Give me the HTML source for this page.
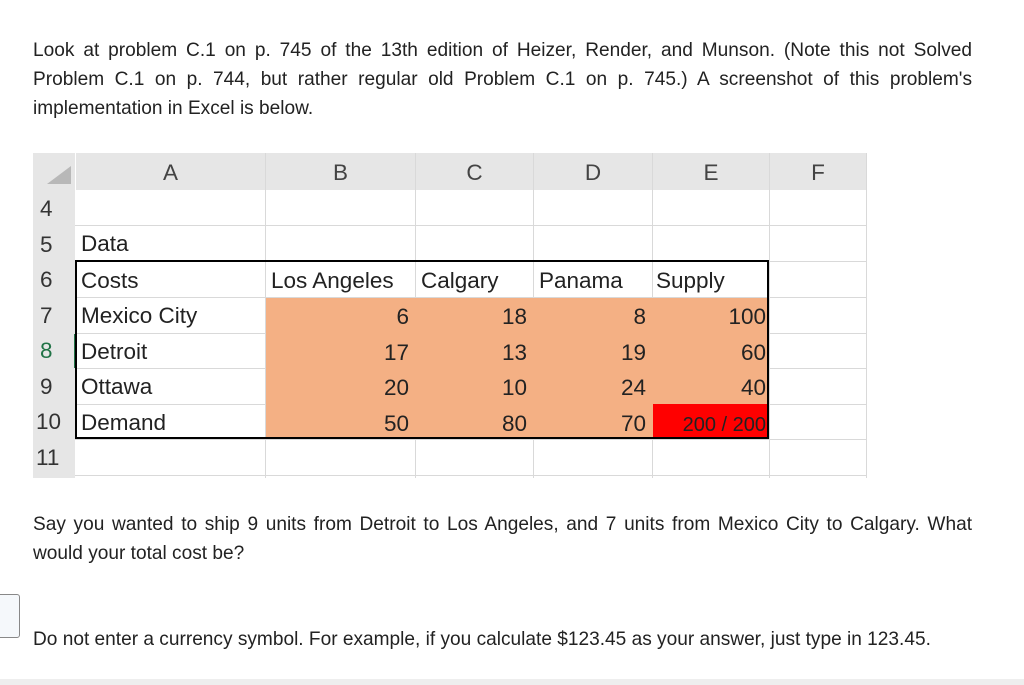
<!DOCTYPE html><html><head><style>
body{margin:0;width:1024px;height:685px;background:#fff;position:relative;overflow:hidden;font-family:"Liberation Sans",Arial,sans-serif;color:#222}
p{position:absolute;left:33px;width:939px;margin:0;font-size:19.1px;line-height:29px}
p span{display:block;text-align:justify;text-align-last:justify}
p span.e{text-align-last:left}
.g{position:absolute;font-family:"Liberation Sans",sans-serif;font-size:22.5px;color:#222}
.c{position:absolute;box-sizing:border-box;line-height:36px;white-space:nowrap}
.h{background:#e6e6e6;color:#444;text-align:center}
.o{background:#f4b084}
.r{text-align:right;padding-right:6px}
.l{padding-left:5px}
.vl{position:absolute;width:1px;background:#d9d9d9}
.hl{position:absolute;height:1px;background:#d9d9d9}
</style></head><body>
<p style="top:36px"><span>Look at problem C.1 on p. 745 of the 13th edition of Heizer, Render, and Munson. (Note this not Solved</span><span>Problem C.1 on p. 744, but rather regular old Problem C.1 on p. 745.) A screenshot of this problem's</span><span class="e">implementation in Excel is below.</span></p>
<div class="g" style="left:0;top:0;width:1024px;height:685px">
<div class="hl" style="left:33px;top:225px;width:833px"></div>
<div class="hl" style="left:33px;top:261px;width:833px"></div>
<div class="hl" style="left:33px;top:297px;width:833px"></div>
<div class="hl" style="left:33px;top:333px;width:833px"></div>
<div class="hl" style="left:33px;top:368px;width:833px"></div>
<div class="hl" style="left:33px;top:404px;width:833px"></div>
<div class="hl" style="left:33px;top:439px;width:833px"></div>
<div class="hl" style="left:33px;top:475px;width:833px"></div>
<div class="vl" style="left:265px;top:153px;height:325px"></div>
<div class="vl" style="left:415px;top:153px;height:325px"></div>
<div class="vl" style="left:533px;top:153px;height:325px"></div>
<div class="vl" style="left:652px;top:153px;height:325px"></div>
<div class="vl" style="left:769px;top:153px;height:325px"></div>
<div class="vl" style="left:866px;top:153px;height:325px"></div>
<div class="c h" style="left:33px;top:153px;width:42px;height:37px"></div>
<div style="position:absolute;left:47px;top:166px;width:0;height:0;border-left:24px solid transparent;border-bottom:18px solid #b8b8b8"></div>
<div class="c h" style="left:76px;top:153px;width:189px;height:37px;line-height:40px">A</div>
<div class="c h" style="left:266px;top:153px;width:149px;height:37px;line-height:40px">B</div>
<div class="c h" style="left:416px;top:153px;width:117px;height:37px;line-height:40px">C</div>
<div class="c h" style="left:534px;top:153px;width:118px;height:37px;line-height:40px">D</div>
<div class="c h" style="left:653px;top:153px;width:116px;height:37px;line-height:40px">E</div>
<div class="c h" style="left:770px;top:153px;width:96px;height:37px;line-height:40px">F</div>
<div class="c h" style="left:33px;top:190px;width:42px;height:288px;line-height:35.5px;text-align:left;padding-left:7px;padding-top:1px;color:#333">4<br>5<br>6<br>7<br><span style="color:#217346">8</span><br>9<br><span style="margin-left:-4px">10</span><br><span style="margin-left:-4px">11</span></div>
<div style="position:absolute;left:74px;top:334px;width:2px;height:34px;background:#217346"></div>
<div class="c o" style="left:266px;top:298px;width:503px;height:141px"></div>
<div class="c" style="left:653px;top:404px;width:116px;height:35px;background:#f00"></div>
<div style="position:absolute;left:75px;top:260px;width:694px;height:179px;border:2px solid #000;box-sizing:border-box"></div>
<div class="c l" style="left:76px;top:226px">Data</div>
<div class="c l" style="left:76px;top:263px">Costs</div>
<div class="c l" style="left:76px;top:298px">Mexico City</div>
<div class="c l" style="left:76px;top:334px">Detroit</div>
<div class="c l" style="left:76px;top:369px">Ottawa</div>
<div class="c l" style="left:76px;top:405px">Demand</div>
<div class="c l" style="left:266px;top:263px">Los Angeles</div>
<div class="c l" style="left:416px;top:263px">Calgary</div>
<div class="c l" style="left:534px;top:263px">Panama</div>
<div class="c l" style="left:651px;top:263px">Supply</div>
<div class="c r" style="left:266px;top:299px;width:149px;line-height:35.5px">6<br>17<br>20<br>50</div>
<div class="c r" style="left:416px;top:299px;width:117px;line-height:35.5px">18<br>13<br>10<br>80</div>
<div class="c r" style="left:534px;top:299px;width:118px;line-height:35.5px">8<br>19<br>24<br>70</div>
<div class="c r" style="left:653px;top:299px;width:116px;line-height:35.5px;padding-right:3px">100<br>60<br>40<br><span style="font-size:20px">200 / 200</span></div>
</div>
<p style="top:510px"><span>Say you wanted to ship 9 units from Detroit to Los Angeles, and 7 units from Mexico City to Calgary. What</span><span class="e">would your total cost be?</span></p>
<div style="position:absolute;left:-8px;top:594px;width:28px;height:44px;border:1px solid #888;border-radius:3px;background:#f5f8fb;box-sizing:border-box"></div>
<p style="top:625px"><span class="e">Do not enter a currency symbol. For example, if you calculate $123.45 as your answer, just type in 123.45.</span></p>
<div style="position:absolute;left:0;top:679px;width:1024px;height:6px;background:#eee"></div>
</body></html>
